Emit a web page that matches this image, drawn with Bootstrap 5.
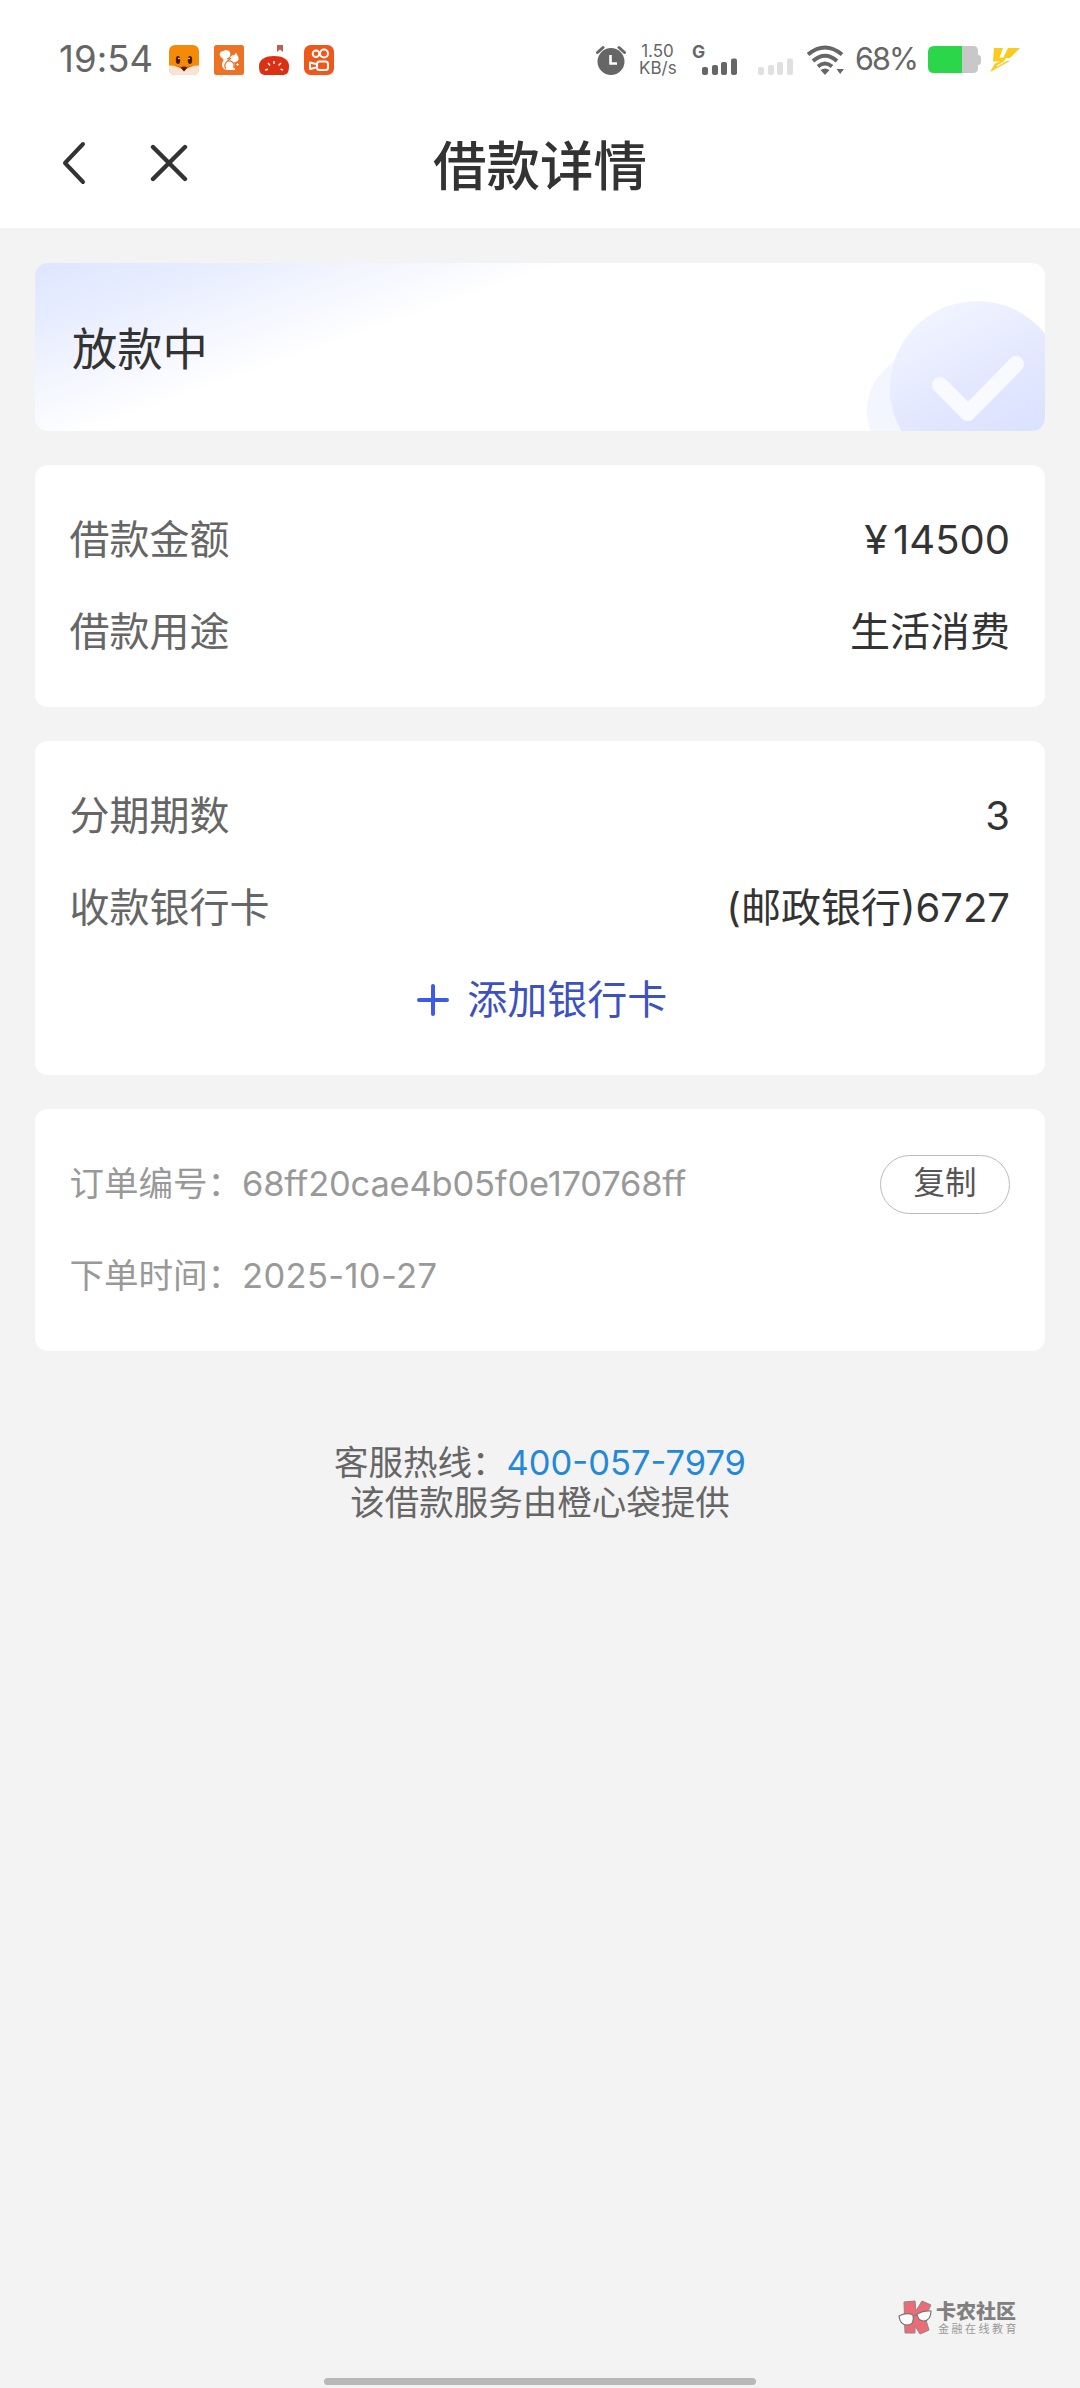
<!DOCTYPE html>
<html lang="zh-CN">
<head>
<meta charset="utf-8">
<meta name="viewport" content="width=device-width, initial-scale=1">
<title>借款详情</title>
<link rel="stylesheet" href="https://cdn.jsdelivr.net/npm/bootstrap@5.3.0/dist/css/bootstrap.min.css">
<style>
body{font-family:Inter,"Noto Sans CJK SC",sans-serif;background:#f3f3f3;color:#333;min-height:2388px;line-height:1.2}
svg{display:block;flex:none}
.status-bar{height:120px;padding:0 60px 1px 59px;color:#666}
.clock{font-size:36.5px;width:110px;letter-spacing:.1px}
.net-speed{font-size:17px;line-height:17px;width:37px;margin:0 16px 0 13px}
.signal{width:46px;height:32px;gap:3.500px;padding:0 1px 1px 10px}
.signal-type{left:0;top:-3px;font-size:17.5px;font-weight:700;line-height:22px}
.battery-pct{font-size:30.5px;width:61px;letter-spacing:-1.9px;white-space:nowrap;margin:0 12px 0 11px}
.title-bar{height:108px;padding-left:62px}
.title-bar svg{margin-bottom:22px}
.title-bar h1{font-size:53.5px;font-weight:500;color:#333;padding-bottom:14px}
.page-cards{padding:34.5px 35px 0;gap:34px}
.panel{border:0;border-radius:13px;background:#fff}
.state-panel{height:168px;padding-left:37px;overflow:hidden;background:linear-gradient(160.7deg,#dfe5ff 0,#e8eeff 13%,#f3f5ff 23%,#fff 36%)}
.state-text{font-size:45.3px;padding-top:8px}
.info-panel{padding:29.500px 35px 28.500px 34.500px}
.info-row{height:92px;font-size:40px;white-space:nowrap}
.info-label{color:#666}
.yen{margin-right:6px;display:inline-block;transform:scaleX(1.06)}
.order-row{font-size:34.5px;color:#999}
.order-no{letter-spacing:-.2px}
.order-date{letter-spacing:.35px}
.copy-btn{width:130px;height:59px;border:1.5px solid #bbb;font-size:31.5px;color:#555;padding:0 0 3px}
.add-card{color:#3d52c0;gap:18px;padding-left:5px}
.hotline{margin-top:92px;font-size:34.5px;line-height:40px;color:#666}
.hotline a{color:#2488d8}
.brand-mark{padding-right:61px;margin-bottom:42px;gap:3px}
.brand-name{font-size:20px;font-weight:900;line-height:22px;color:#808080}
.brand-sub{font-size:11px;line-height:12px;letter-spacing:2.5px;color:#999;padding-left:2px;white-space:nowrap}
.home-bar{width:432px;height:7px;background:#b8b8b8;margin-bottom:3px}
</style>
</head>
<body class="d-flex flex-column">
<header class="bg-white">
  <div class="status-bar d-flex align-items-center">
    <span class="clock">19:54</span>
    <div class="d-flex" style="gap:15px">
      <svg width="30" height="30" viewBox="0 0 30 30"><defs><clipPath id="fx"><rect width="30" height="30" rx="6"/></clipPath></defs><g clip-path="url(#fx)"><path fill="#f58a08" d="M0 0h30v30H0z"/><path fill="#fbe3d3" d="M0 20.500q8-.5 15 5 7-5.500 15-5V30H0z"/><path fill="#ef6d0d" d="M3 20.600q7 0 12 2.400 5-2.400 12-2.400-7 .8-12 5-5-4.200-12-5z"/></g><ellipse cx="9" cy="15" rx="2.200" ry="4" fill="#4b1c0a"/><ellipse cx="21" cy="15" rx="2.200" ry="4" fill="#4b1c0a"/><circle cx="10" cy="13.500" r=".8" fill="#fff"/><circle cx="20" cy="13.500" r=".8" fill="#fff"/><path fill="#4b1c0a" d="M11.500 22.500q3.500-2 7 0L15 26.500z"/></svg>
      <svg width="30" height="30" viewBox="0 0 30 30"><rect width="30" height="30" rx="2.500" fill="#ee7226"/><path fill="#fff" d="M16.500 8C15 4.800 11.500 4.200 9.500 6 6 6 4.800 9.200 6.500 11.500c1 1.600 3 2 3 3.500 0 1.200-2 2.500-1.500 5.500.5 3 3 4.500 6 4.500h7c0-1.500-.5-2.200-1.500-2.500 1.800-2 1.500-4 .5-5.500 3 .3 5-1.500 4.500-4.500l-1.500-3-1-2-1.500 2.500c-3 0-4.500 1.500-5 4-1.500.8-2.500.5-3-.5 2.500-.5 4.500-2.500 3.500-6z"/><path d="M12 23.500a4.500 4.500 0 1 1 7.500-1M13 16.500l4-3.500" stroke="#ee7226" stroke-width="1.200" fill="none"/><path d="M23.500 18v3M22 19.500h3" stroke="#fff" stroke-width=".8"/></svg>
      <svg width="30" height="30" viewBox="0 0 30 30"><path fill="#bd6047" d="M18 0h6v7l-3-2.500L18 7z"/><path d="M0 21C0 14 7 11 15 11s15 3 15 10-2 9-7 9H7c-5 0-7-2-7-9z" fill="#dc3013"/><path d="M9 18l2 2.500M15 16v3M22 18l-2.500 2.500M6 25l3-.7M24 25l-2.500-.8" stroke="#fff" stroke-width="1.400"/></svg>
      <svg width="30" height="30" viewBox="0 0 30 30"><rect width="30" height="30" rx="6.500" fill="#f0571b"/><g fill="none" stroke="#fff" stroke-width="2"><circle cx="12" cy="8.800" r="3.300"/><circle cx="20" cy="8.500" r="4"/><rect x="13" y="16.500" width="11" height="8.500" rx="2.500"/><path d="M12 19l-6-1.500v6.500l6-1.500" stroke-linejoin="round"/></g></svg>
    </div>
    <div class="d-flex align-items-center ms-auto">
      <svg width="30" height="30" viewBox="0 0 30 30"><circle cx="15" cy="16.500" r="13.500" fill="#666"/><path d="M1.500 7.500l5.500-5M28.500 7.500L23 2.500" stroke="#666" stroke-width="3" stroke-linecap="round"/><path d="M14.500 10v8.500H21" stroke="#fff" stroke-width="2.600" fill="none"/></svg>
      <div class="net-speed text-center"><div>1.50</div><div>KB/s</div></div>
      <div class="signal position-relative p-0"><span class="signal-type position-absolute">G</span><svg width="46" height="32" viewBox="0 0 46 32" fill="#666"><rect x="10" y="23" width="6" height="8" rx="2"/><rect x="20" y="21" width="6" height="10" rx="2"/><rect x="29" y="18" width="6" height="13" rx="2"/><rect x="39" y="14.500" width="6" height="16.500" rx="2"/></svg></div>
      <svg width="36" height="32" viewBox="0 0 36 32" style="margin-left:20px" fill="#e0e0e0"><rect y="23" width="6" height="8" rx="2"/><rect x="10" y="21" width="6" height="10" rx="2"/><rect x="19" y="18" width="6" height="13" rx="2"/><rect x="29" y="14.500" width="6" height="16.500" rx="2"/></svg>
      <svg width="37" height="30" viewBox="0 0 37 30" style="margin-left:13px"><g fill="none" stroke="#666" stroke-width="4"><path d="M1 9.500Q18-4.500 35 9.500"/><path d="M6 16Q18 5.500 30 16"/><path d="M11 21.500Q18 15.500 25 21.500"/></g><path fill="#666" d="M13.500 25q4.500-3 9 0L18 30zM29.500 24H37L33.200 29z"/></svg>
      <span class="battery-pct">68%</span>
      <svg width="53" height="28" viewBox="0 0 53 28"><path d="M6 0h39q5 0 5 5v4q3 0 3 3v4q0 3-3 3v3q0 5-5 5H6z" fill="#c8c8c8"/><path d="M34 0v27H6q-6 0-6-6V6q0-6 6-6z" fill="#2cd64b"/></svg>
      <svg width="30" height="26" viewBox="0 0 30 26" style="margin-left:9px"><path fill="#fccb1f" d="M4 1h9l-3.500 9.500H13L18 1h12L20 11h-4l-2 3h6L0 25l5-8.500 5-2H3z"/><path d="M17 1l-4.500 9.500M20 11.500L7 19" stroke="#fff" stroke-width="1.200" fill="none"/></svg>
    </div>
  </div>
  <nav class="title-bar position-relative d-flex align-items-center">
    <svg width="24" height="44" viewBox="0 0 24 44" fill="none" stroke="#333" stroke-width="4" stroke-linecap="round" stroke-linejoin="round"><path d="M21 3L3 22l18 19"/></svg>
    <svg width="38" height="38" viewBox="0 0 38 38" style="margin-left:64px" stroke="#333" stroke-width="4.400" stroke-linecap="round"><path d="M3 3l32 32M35 3L3 35"/></svg>
    <h1 class="position-absolute start-0 end-0 text-center mb-0">借款详情</h1>
  </nav>
</header>
<main class="page-cards d-flex flex-column">
  <section class="card panel state-panel flex-row justify-content-between">
    <span class="state-text align-self-center">放款中</span>
    <svg width="180" height="168" viewBox="865 262 180 168"><defs><linearGradient id="disc" x1=".2" y1="0" x2=".65" y2=".9"><stop stop-color="#f3f6ff"/><stop offset=".5" stop-color="#e4e9ff"/><stop offset="1" stop-color="#dae1ff"/></linearGradient></defs><circle cx="925" cy="410" r="58" fill="#f3f5ff"/><circle cx="977" cy="387" r="87" fill="url(#disc)"/><path d="M940 384l28 28 48-49" fill="none" stroke="#f8faff" stroke-width="16" stroke-linecap="round" stroke-linejoin="round"/></svg>
  </section>
  <section class="card panel info-panel">
    <div class="info-row d-flex align-items-center justify-content-between"><span class="info-label">借款金额</span><span><span class="yen">¥</span>14500</span></div>
    <div class="info-row d-flex align-items-center justify-content-between"><span class="info-label">借款用途</span><span>生活消费</span></div>
  </section>
  <section class="card panel info-panel">
    <div class="info-row d-flex align-items-center justify-content-between"><span class="info-label">分期期数</span><span>3</span></div>
    <div class="info-row d-flex align-items-center justify-content-between"><span class="info-label">收款银行卡</span><span>(邮政银行)6727</span></div>
    <a class="info-row add-card d-flex align-items-center justify-content-center text-decoration-none" href="#"><svg width="32" height="32" viewBox="0 0 32 32"><path d="M16 2v28M2 16h28" stroke="#3b5be8" stroke-width="4" stroke-linecap="round"/></svg>添加银行卡</a>
  </section>
  <section class="card panel info-panel">
    <div class="info-row order-row d-flex align-items-center"><span>订单编号：</span><span class="order-no">68ff20cae4b05f0e170768ff</span><button class="btn rounded-pill copy-btn ms-auto" type="button">复制</button></div>
    <div class="info-row order-row d-flex align-items-center"><span>下单时间：</span><span class="order-date">2025-10-27</span></div>
  </section>
</main>
<div class="hotline text-center"><div>客服热线：<a class="text-decoration-none" href="tel:4000577979">400-057-7979</a></div><div>该借款服务由橙心袋提供</div></div>
<footer class="mt-auto">
  <div class="brand-mark d-flex justify-content-end align-items-center">
    <svg width="35" height="36" viewBox="0 0 35 36"><path d="M6 2l11-1 1 10 6-10 9 4-6 12 4 13-9 4-5-8v7H7z" fill="#ed6b76" stroke="#888" stroke-width="1"/><path d="M1 16q8-4 14-1 2 10-6 10-7 0-8-9zM19 14q7-4 14-3 0 9-7 10-6 0-7-7z" fill="#fafafa" stroke="#777" stroke-width="1.200"/><path d="M15 16l4-1" stroke="#777"/></svg>
    <div><div class="brand-name">卡农社区</div><div class="brand-sub">金融在线教育</div></div>
  </div>
  <div class="home-bar rounded-pill mx-auto"></div>
</footer>
<script src="https://cdn.jsdelivr.net/npm/bootstrap@5.3.0/dist/js/bootstrap.bundle.min.js"></script>
</body>
</html>
